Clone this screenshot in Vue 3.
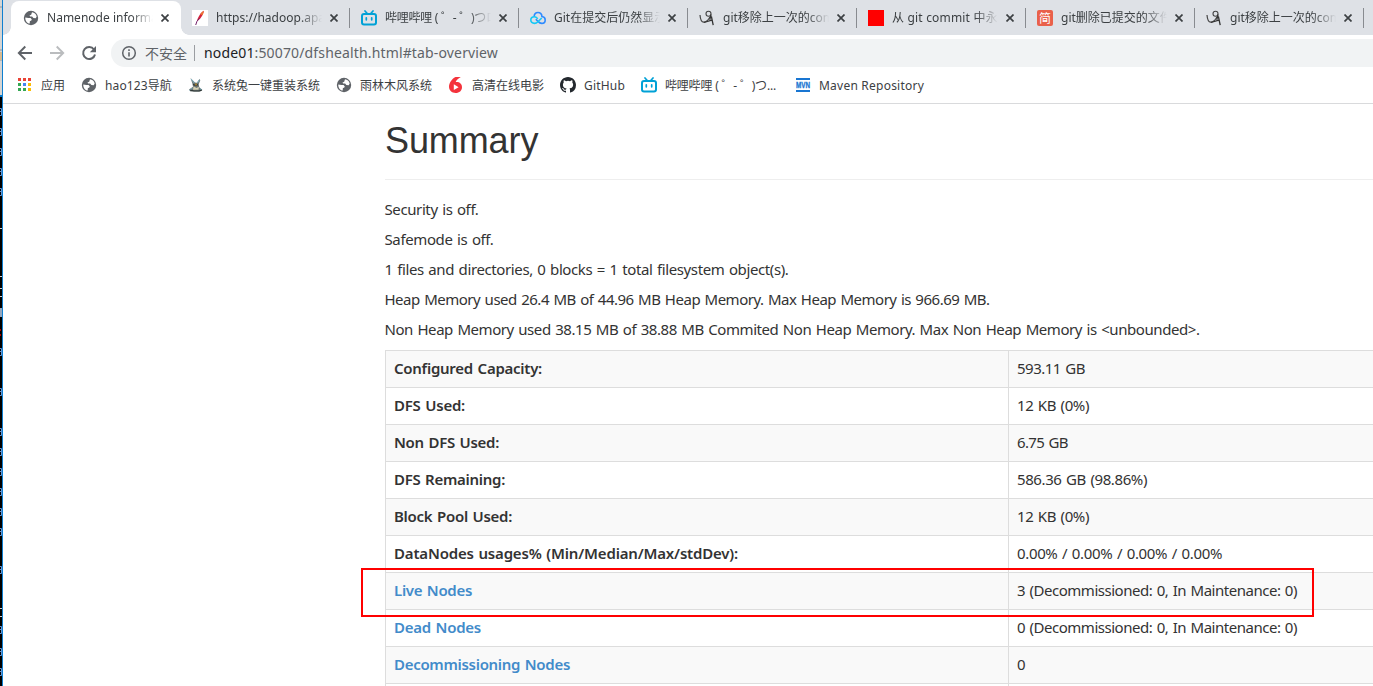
<script setup>
import { nextTick } from 'vue'

const vFit = {
  async mounted(el, { value }) {
    if (!value) return
    await nextTick()
    const natural = el.getBoundingClientRect().width
    el.style.letterSpacing = `${(value - natural) / el.textContent.length}px`
  }
}

const tabs = [
  { icon: 'globe', title: 'Namenode information', width: 133, active: true },
  { icon: 'feather', title: 'https://hadoop.apache', width: 129 },
  { icon: 'bili', title: '哔哩哔哩 ( ゜- ゜)つロ 干杯', width: 139 },
  { icon: 'cloud', title: 'Git在提交后仍然显示', width: 0 },
  { icon: 'script', title: 'git移除上一次的commit', width: 0 },
  { icon: 'red', title: '从 git commit 中永久', width: 118 },
  { icon: 'jian', title: 'git删除已提交的文件', width: 0 },
  { icon: 'script', title: 'git移除上一次的commit', width: 0 }
]

const bookmarks = [
  { icon: 'apps', title: '应用', width: 24 },
  { icon: 'globe', title: 'hao123导航', width: 67 },
  { icon: 'rabbit', title: '系统兔一键重装系统', width: 108 },
  { icon: 'globe', title: '雨林木风系统', width: 72 },
  { icon: 'six', title: '高清在线电影', width: 72 },
  { icon: 'github', title: 'GitHub', width: 41 },
  { icon: 'bili', title: '哔哩哔哩 ( ゜- ゜)つ...', width: 111 },
  { icon: 'mvn', title: 'Maven Repository', width: 105 }
]

const paragraphs = [
  { text: 'Security is off.', width: 94 },
  { text: 'Safemode is off.', width: 109 },
  { text: '1 files and directories, 0 blocks = 1 total filesystem object(s).', width: 404 },
  { text: 'Heap Memory used 26.4 MB of 44.96 MB Heap Memory. Max Heap Memory is 966.69 MB.', width: 605 },
  { text: 'Non Heap Memory used 38.15 MB of 38.88 MB Commited Non Heap Memory. Max Non Heap Memory is <unbounded>.', width: 815 }
]

const rows = [
  { name: 'Configured Capacity:', nw: 148, value: '593.11 GB', vw: 68 },
  { name: 'DFS Used:', nw: 71, value: '12 KB (0%)', vw: 72 },
  { name: 'Non DFS Used:', nw: 105, value: '6.75 GB', vw: 51 },
  { name: 'DFS Remaining:', nw: 111, value: '586.36 GB (98.86%)', vw: 130 },
  { name: 'Block Pool Used:', nw: 118, value: '12 KB (0%)', vw: 72 },
  { name: 'DataNodes usages% (Min/Median/Max/stdDev):', nw: 344, value: '0.00% / 0.00% / 0.00% / 0.00%', vw: 205 },
  { name: 'Live Nodes', nw: 78, value: '3 (Decommissioned: 0, In Maintenance: 0)', vw: 280, link: true },
  { name: 'Dead Nodes', nw: 87, value: '0 (Decommissioned: 0, In Maintenance: 0)', vw: 280, link: true },
  { name: 'Decommissioning Nodes', nw: 176, value: '0', vw: 0, link: true },
  { name: '', nw: 0, value: '', vw: 0 }
]

// Slivers of terminal characters showing behind the browser window.
const letters = [112, 132, 152, 172, 192, 352, 392, 432, 452, 472, 492, 512, 532, 570, 630, 652, 672]
const dashes = [228, 276, 288, 296, 608, 616]
</script>

<template>
  <div class="screen">
    <svg width="0" height="0" class="defs">
      <symbol id="globe" viewBox="0 0 16 16">
        <circle cx="8" cy="8" r="7.2" fill="#5f6368" />
        <path d="M2.300 7.500 5.400 8h2.200l1.200 1.500-.7 1.300-1.200.3-.2 2.500C4.100 13.300 2.100 10.900 2.300 7.500Z" fill="#fff" />
        <path d="M9 2.300C11.300 2.600 13.100 4.200 13.700 6.500L12.700 8.200l-2.300-.3-1.300-1.500-2 .2-.6-1.200 1.700-.7Z" fill="#fff" />
      </symbol>
      <symbol id="feather" viewBox="0 0 16 16">
        <rect width="16" height="16" fill="#fff" />
        <path d="M11.800.7c-3 1.600-5.800 6-7 10.600C8.300 9.600 11.500 4.600 11.800.7Z" fill="#d3213b" />
        <path d="M11.800.7c-1.500.8-2.700 2-3.700 3.500l2.300 1.100c.9-1.500 1.400-3.300 1.400-4.600Z" fill="#ec7132" />
        <path d="M7.400 8.300 5 11.200 3.700 15" stroke="#73216b" stroke-width="1" fill="none" />
      </symbol>
      <symbol id="bili" viewBox="0 0 16 16">
        <path d="m4 1 2 2.300M12 1l-2 2.300" stroke="#00a1d6" stroke-width="1.7" stroke-linecap="round" />
        <rect x="1" y="4" width="14" height="10.500" rx="2" fill="none" stroke="#00a1d6" stroke-width="2" />
        <path d="M5.300 7.800v2M10.700 7.800v2" stroke="#00a1d6" stroke-width="1.700" stroke-linecap="round" />
      </symbol>
      <symbol id="cloud" viewBox="0 0 16 16">
        <path d="M4.200 7C3.900 3.900 5.700 2.500 8 2.500s4 1.600 3.900 4c2 .2 3.300 1.600 3.300 3.400 0 2-1.400 3.500-3.500 3.500-1.800 0-2.500-.7-3.700-2L5.800 9.200" fill="none" stroke="#2e8bff" stroke-width="1.600" />
        <path d="m11.700 8-4 4c-.9.900-1.700 1.400-3.200 1.400C2.300 13.400.8 12 .8 10.100S2.300 6.800 4.500 6.800c1.400 0 2 .6 3.300 1.900" fill="none" stroke="#17c9f4" stroke-width="1.600" />
      </symbol>
      <symbol id="script" viewBox="0 0 16 16">
        <path d="M1 5c.3 4 1.600 7.100 3.700 7.100 2.100 0 4.800-2.200 6.400-5.300" fill="none" stroke="#444" stroke-width="1.200" />
        <circle cx="9.500" cy="3.700" r="2.500" fill="none" stroke="#444" stroke-width="1.100" />
        <path d="M12 4.500c-.2 2-.7 3.700-1.300 5.200M5 12.500l8.600-2.600M12.400 6.500l1.800 8.700" fill="none" stroke="#333" stroke-width="1.300" />
      </symbol>
      <symbol id="red" viewBox="0 0 16 16"><rect width="16" height="16" fill="#f00" /></symbol>
      <symbol id="jian" viewBox="0 0 16 16">
        <rect width="16" height="16" rx="2" fill="#e9604a" />
        <text x="8" y="12.700" text-anchor="middle" fill="#fff" class="jian-text">简</text>
      </symbol>
      <symbol id="apps" viewBox="0 0 16 16">
        <path d="M1 1h3v3H1zM6 1h3v3H6zM11 1h3v3h-3z" fill="#ea4335" />
        <path d="M1 6h3v3H1zM1 11h3v3H1zM6 11h3v3H6z" fill="#34a853" />
        <path d="M6 6h3v3H6z" fill="#4285f4" />
        <path d="M11 6h3v3h-3zM11 11h3v3h-3z" fill="#fbbc05" />
      </symbol>
      <symbol id="rabbit" viewBox="0 0 16 16">
        <path d="M2.500 1 7 5.500l1.800.3L11.500 2l.8 1.300-1.600 4 .6 3 3 2.500-2 1.800H2.500l-1.500-2 4-2.800-.6-3.300Z" fill="#6c7675" />
        <path d="m3 2 3.300 4M11.300 2.800 9.500 6M1.500 13.200l3-2M12 11.500l2 1.500" stroke="#7fb6c6" stroke-width="1" />
        <path d="m5.500 9.300 3 1.700 2.400-1.300-.4 3H5Z" fill="#d3d0b2" />
        <path d="m2 13 4 1h5l3-1M5 7.500l3 1 2-1" fill="none" stroke="#2d3534" stroke-width="1.200" />
        <path d="M7 6.500h2v2H7z" fill="#9a7d35" />
      </symbol>
      <symbol id="six" viewBox="0 0 16 16">
        <path d="M7.500 0h5.300C10 1.600 8.200 3.100 7.700 5c3.700-.4 6.300 1.700 6.300 5.200 0 3.400-2.700 5.800-6.400 5.800S1 13.500 1 9.800C1 5.900 3.700 2 7.500 0Z" fill="#f4333c" />
        <path d="m5.800 7.300 4.800 2.900-4.800 2.900Z" fill="#fff" />
      </symbol>
      <symbol id="github" viewBox="0 0 16 16">
        <path fill="#24292e" d="M8 0C3.580 0 0 3.580 0 8c0 3.540 2.290 6.530 5.470 7.590.4.070.55-.17.55-.38 0-.19-.01-.82-.01-1.490-2.010.37-2.530-.49-2.690-.94-.09-.23-.48-.94-.82-1.130-.28-.15-.68-.52-.01-.53.63-.01 1.080.58 1.230.82.72 1.210 1.870.87 2.330.66.070-.52.28-.87.51-1.070-1.780-.2-3.640-.89-3.640-3.950 0-.87.31-1.590.82-2.150-.08-.2-.36-1.020.08-2.120 0 0 .67-.21 2.200.82a7.600 7.600 0 0 1 4 0c1.530-1.040 2.200-.82 2.200-.82.44 1.100.16 1.920.08 2.120.51.56.82 1.270.82 2.150 0 3.070-1.870 3.750-3.650 3.950.29.25.54.73.54 1.480 0 1.070-.01 1.930-.01 2.200 0 .21.15.46.55.38A8 8 0 0 0 16 8c0-4.420-3.580-8-8-8Z" />
      </symbol>
      <symbol id="mvn" viewBox="0 0 16 16">
        <path d="M1 1h14v2H1zM1 13h14v2H1z" fill="#1976d2" />
        <text x="8" y="11" text-anchor="middle" textLength="14" lengthAdjust="spacingAndGlyphs" fill="#1976d2" stroke="#1976d2" stroke-width=".3" class="mvn-text">MVN</text>
      </symbol>
    </svg>

    <svg class="terminal" width="2" height="686" viewBox="0 0 2 686">
      <rect width="2" height="686" fill="#000" />
      <rect width="2" height="96" fill="#d6d5d3" />
      <path d="M0 7h2M0 50h2M0 60h2" stroke="#8f989f" />
      <path d="M0 52h2v8H0z" fill="#d8ba8f" />
      <rect y="95" width="2" height="2" fill="#0878c8" />
      <path v-for="y in letters" :key="y" :d="`M0 ${y - 3.500}h1.500v7H0m0-4h1`" fill="none" stroke="#5f95d8" />
      <path v-for="y in dashes" :key="y" :d="`M0 ${y + .5}h2`" stroke="#ccc" />
      <path d="M0 308h2v9H0z" fill="#93a7c0" />
      <path d="M0 330h1M0 335h1" stroke="#a00" stroke-width="2" />
    </svg>

    <div class="browser">
      <div class="tab-strip">
        <div v-for="(tab, i) in tabs" :key="i" class="tab" :class="{ active: tab.active }">
          <svg class="icon" width="16" height="16"><use :href="`#${tab.icon}`" /></svg>
          <div class="tab-title"><span v-fit="tab.width">{{ tab.title }}</span></div>
          <svg class="close" width="8" height="8" viewBox="0 0 8 8"><path d="m.5.5 7 7m0-7-7 7" stroke="#3c4043" stroke-width="1.700" /></svg>
        </div>
      </div>

      <div class="toolbar">
        <svg class="nav" width="16" height="16" viewBox="0 0 16 16"><path d="M15 8H2M8.300 1.500 1.800 8l6.500 6.500" fill="none" stroke="#5f6368" stroke-width="1.900" /></svg>
        <svg class="nav" width="16" height="16" viewBox="0 0 16 16"><path d="M1 8h13M7.700 1.500 14.200 8l-6.500 6.500" fill="none" stroke="#babcbe" stroke-width="1.900" /></svg>
        <svg class="nav" width="16" height="16" viewBox="0 0 16 16">
          <path d="M13 4.500A6 6 0 1 0 14 9.500" fill="none" stroke="#5f6368" stroke-width="2" />
          <path d="M15 1v6.200H8.800Z" fill="#5f6368" />
        </svg>
        <div class="omnibox">
          <svg width="16" height="16" viewBox="0 0 16 16">
            <circle cx="8" cy="8" r="6.300" fill="none" stroke="#5f6368" stroke-width="1.500" />
            <path d="M8 7.200v4.300M8 4.300v1.600" stroke="#5f6368" stroke-width="1.600" />
          </svg>
          <span class="insecure">不安全</span>
          <span class="divider"></span>
          <span v-fit="294" class="url"><b>node01</b>:50070/dfshealth.html#tab-overview</span>
        </div>
      </div>

      <div class="bookmarks">
        <div v-for="(mark, i) in bookmarks" :key="i" class="bookmark" :class="mark.icon">
          <svg class="icon" width="16" height="16"><use :href="`#${mark.icon}`" /></svg>
          <span v-fit="mark.width">{{ mark.title }}</span>
        </div>
      </div>

      <main class="page">
        <h1>Summary</h1>
        <p v-for="p in paragraphs" :key="p.text"><span v-fit="p.width">{{ p.text }}</span></p>
        <div class="table">
          <div v-for="(row, i) in rows" :key="i" class="row">
            <div class="name" :class="{ link: row.link }"><span v-fit="row.nw">{{ row.name }}</span></div>
            <div class="value"><span v-fit="row.vw">{{ row.value }}</span></div>
          </div>
        </div>
      </main>
    </div>
    <div class="highlight"></div>
  </div>
</template>

<style>
body { overflow: hidden; }
</style>

<style scoped>
.screen {
  position: relative;
  display: flex;
  width: 1373px;
  height: 686px;
  overflow: hidden;
  background: #fff;
  font-family: "Noto Sans", "Noto Sans CJK SC", sans-serif;
  color: #333;
}
.defs { position: absolute; }
.terminal { flex: none; }
.browser {
  flex: 1;
  min-width: 0;
  border-left: 1px solid #0f7fd0;
  overflow: hidden;
}
.tab-strip {
  display: flex;
  height: 35px;
  padding-left: 8px;
  background: #dee1e6;
  font-size: 12px;
  color: #3c4043;
}
.tab {
  position: relative;
  flex: none;
  display: flex;
  align-items: center;
  box-sizing: border-box;
  width: 169px;
  height: 35px;
  padding-left: 11px;
  border-right: 1px solid #888b90;
  border-image: linear-gradient(transparent 8px, #888b90 8px, #888b90 28px, transparent 28px) 0 1;
}
.tab.active {
  width: 170px;
  height: 34px;
  margin-top: 1px;
  padding-left: 12px;
  border: 0;
  border-radius: 8px 8px 0 0;
  background: #fff;
}
.tab.active::before, .tab.active::after {
  content: "";
  position: absolute;
  bottom: 0;
  width: 8px;
  height: 8px;
}
.tab.active::before { left: -8px; background: radial-gradient(circle at 0 0, transparent 7.5px, #fff 8px); }
.tab.active::after { right: -8px; background: radial-gradient(circle at 100% 0, transparent 7.5px, #fff 8px); }
.icon { flex: none; }
.tab-title {
  width: 106px;
  margin-left: 8px;
  line-height: 20px;
  overflow: hidden;
  white-space: nowrap;
  -webkit-mask-image: linear-gradient(90deg, #000 84px, transparent 106px);
  mask-image: linear-gradient(90deg, #000 84px, transparent 106px);
}
.close { margin-left: 8px; }
.toolbar {
  display: flex;
  align-items: center;
  height: 36px;
  padding-left: 14px;
}
.nav { flex: none; margin-right: 16px; }
.omnibox {
  display: flex;
  align-items: center;
  flex: 1;
  height: 28px;
  margin-left: -2px;
  padding-left: 10px;
  border-radius: 14px 0 0 14px;
  background: #f1f3f4;
  color: #5f6368;
  font-size: 14px;
  white-space: nowrap;
}
.insecure { margin-left: 8px; padding-bottom: 1px; }
.divider { width: 1px; height: 16px; margin: 0 9px 0 7px; background: #9a9da1; }
.url { padding-bottom: 2px; }
.url b { font-weight: 400; color: #202124; }
.bookmarks {
  display: flex;
  align-items: center;
  gap: 16px;
  height: 28px;
  padding: 0 0 4px 14px;
  border-bottom: 1px solid #d9dadc;
  font-size: 12px;
  color: #3c4043;
}
.bookmark { display: flex; align-items: center; gap: 8px; white-space: nowrap; }
.bookmark.mvn { margin-left: 3px; }
.jian-text { font: 12px "Noto Sans CJK SC", sans-serif; }
.mvn-text { font: bold 8.5px "Liberation Sans", sans-serif; }
.page { padding-left: 382px; font-size: 15px; word-spacing: 1px; }
h1 {
  margin: 0 0 19px;
  padding: 17px 0 18px;
  border-bottom: 1px solid #eee;
  font: 400 36px/40px "Liberation Sans", sans-serif;
  letter-spacing: -.1px;
}
p { margin: 0 0 10px; height: 20px; line-height: 20px; white-space: nowrap; }
p span { margin-left: -.5px; }
.table { width: 1170px; margin-top: 11px; border-top: 1px solid #ddd; border-left: 1px solid #ddd; }
.row { display: flex; height: 36px; border-bottom: 1px solid #ddd; line-height: 34px; white-space: nowrap; }
.row:nth-child(odd) { background: #f9f9f9; }
.name { flex: none; width: 614px; padding-left: 8px; border-right: 1px solid #ddd; font-weight: 600; }
.link { color: #428bca; }
.value { padding-left: 8px; }
.highlight {
  position: absolute;
  left: 361px;
  top: 568px;
  box-sizing: border-box;
  width: 953px;
  height: 49px;
  border: 2px solid #f00;
}
</style>
